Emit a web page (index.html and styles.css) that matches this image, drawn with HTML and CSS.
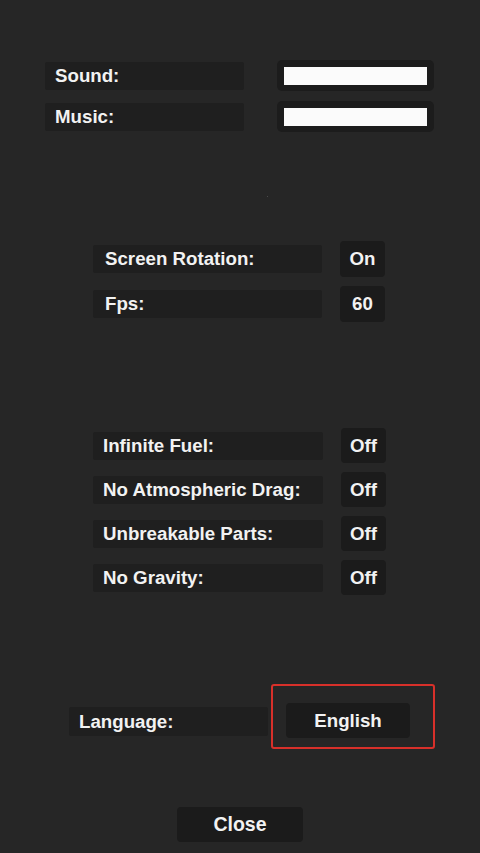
FILE: index.html
```html
<!DOCTYPE html>
<html lang="en">
<head>
<meta charset="utf-8">
<title>Settings</title>
<link rel="stylesheet" href="styles.css">
</head>
<body>
<main class="settings">
  <section class="audio">
    <div class="row">
      <div class="label label-wide">Sound:</div>
      <div class="slider"><div class="slider-fill"></div></div>
    </div>
    <div class="row">
      <div class="label label-wide">Music:</div>
      <div class="slider"><div class="slider-fill"></div></div>
    </div>
  </section>

  <div class="dot"></div>

  <section class="display">
    <div class="row row-toggle">
      <div class="label label-mid">Screen Rotation:</div>
      <div class="btn btn-small btn-tall">On</div>
    </div>
    <div class="row row-toggle">
      <div class="label label-mid">Fps:</div>
      <div class="btn btn-small btn-tall">60</div>
    </div>
  </section>

  <section class="cheats">
    <div class="row row-toggle">
      <div class="label label-mid2">Infinite Fuel:</div>
      <div class="btn btn-small">Off</div>
    </div>
    <div class="row row-toggle">
      <div class="label label-mid2">No Atmospheric Drag:</div>
      <div class="btn btn-small">Off</div>
    </div>
    <div class="row row-toggle">
      <div class="label label-mid2">Unbreakable Parts:</div>
      <div class="btn btn-small">Off</div>
    </div>
    <div class="row row-toggle">
      <div class="label label-mid2">No Gravity:</div>
      <div class="btn btn-small">Off</div>
    </div>
  </section>

  <section class="language">
    <div class="label label-lang">Language:</div>
    <div class="highlight">
      <div class="btn btn-lang">English</div>
    </div>
  </section>

  <section class="footer">
    <div class="btn btn-close">Close</div>
  </section>
</main>
</body>
</html>
```

FILE: styles.css
```css
* { box-sizing: border-box; }

html, body {
  margin: 0;
  padding: 0;
  background: #262626;
}

body {
  width: 480px;
  height: 853px;
  overflow: hidden;
  font-family: "Liberation Sans", Arial, sans-serif;
  font-weight: bold;
  font-size: 18.7px;
  color: #f2f2f2;
}

.settings {
  display: flex;
  flex-direction: column;
}

.row {
  display: flex;
  align-items: center;
}

.label {
  display: flex;
  align-items: center;
  height: 28px;
  padding-left: 10px;
  background: #1f1f1f;
  border-radius: 2px;
  white-space: nowrap;
}

.btn {
  display: flex;
  align-items: center;
  justify-content: center;
  background: #1b1b1b;
  border-radius: 4px;
  white-space: nowrap;
}

/* audio */
.audio {
  margin-top: 60px;
  padding-left: 45px;
  display: flex;
  flex-direction: column;
  gap: 10px;
}
.audio .row { gap: 33px; height: 31px; }
.label-wide { width: 199px; }

.slider {
  width: 157px;
  height: 31px;
  padding: 7px 7px 6px 7px;
  background: #1c1c1c;
  border-radius: 5px;
}
.slider-fill {
  width: 100%;
  height: 100%;
  background: #fbfbfb;
}

.dot {
  width: 1px;
  height: 1px;
  margin: 64px 0 0 267px;
  background: #4a4a4a;
}

/* display */
.display {
  margin-top: 44px;
  padding-left: 93px;
  display: flex;
  flex-direction: column;
  gap: 9px;
}
.row-toggle { gap: 18px; }
.label-mid { width: 229px; padding-left: 12px; }
.label-mid2 { width: 230px; }
.btn-small { width: 45px; height: 35px; }
.btn-tall { height: 36px; }

/* cheats */
.cheats {
  margin-top: 106px;
  padding-left: 93px;
  display: flex;
  flex-direction: column;
  gap: 9px;
}

/* language */
.language {
  margin-top: 89px;
  padding-left: 69px;
  display: flex;
  align-items: center;
  gap: 3px;
}
.label-lang {
  width: 199px;
  height: 29px;
  margin-top: 10px;
}
.highlight {
  width: 164px;
  height: 65px;
  padding: 17px 23px 9px 13px;
  border: 2px solid #d8302a;
  border-radius: 3px;
}
.btn-lang {
  width: 124px;
  height: 35px;
}

/* footer */
.footer {
  margin-top: 58px;
  display: flex;
  justify-content: center;
}
.btn-close {
  width: 126px;
  height: 35px;
  font-size: 19.5px;
}
```
